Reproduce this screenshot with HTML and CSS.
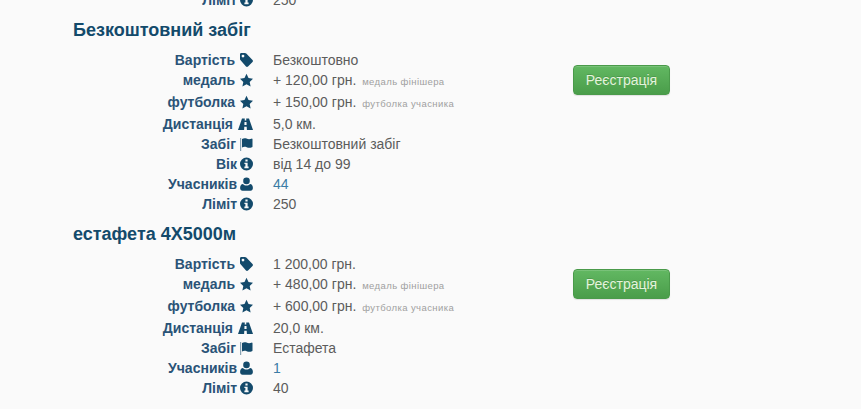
FILE: index.html
```html
<!DOCTYPE html>
<html lang="en">
<head>
    <meta charset="UTF-8">
    <meta name="viewport" content="width=device-width, initial-scale=1.0">
    <title>Дистанції</title>
    <link rel="stylesheet" href="styles.css">
</head>
<body>
    <svg class="defs" width="0" height="0">
        <symbol id="i-tag" viewBox="0 0 15 14"><path d="M2 1.300C2 .6 2.600 0 3.300 0h3.600c.5 0 1 .2 1.400.6l6.200 6.400c.6.6.6 1.400 0 2l-4.500 4.500c-.6.600-1.400.6-2 0L2.600 7.300C2.200 6.900 2 6.400 2 5.900zM5 4.500a1.400 1.400 0 1 0 0-2.800 1.400 1.400 0 0 0 0 2.800z" fill-rule="evenodd"/></symbol>
        <symbol id="i-star" viewBox="0 0 15 14"><path d="M8.500 .8l2 4.300 4.500.6-3.300 3.200.9 4.600-4.100-2.300-4.100 2.300.9-4.600L2 5.700l4.500-.6z"/></symbol>
        <symbol id="i-road" viewBox="0 0 17 14"><path d="M6 1.500h2.800l-.1 2h1.600l-.1-2H13l4 11.500h-6.100l-.2-3.200H8.300L8.100 13H2zM8.500 5l-.1 3h2.200l-.1-3z" fill-rule="evenodd"/></symbol>
        <symbol id="i-flag" viewBox="0 0 14 14"><path d="M1 1h1.200v13H1z" opacity=".5"/><path d="M3 2c1.500-.9 3-1 4.500-.4s3 .8 5 .1c.6-.2 1 0 1 .5v7.200c0 .4-.2.6-.6.800-1.900.8-3.500.7-5.200 0-1.500-.6-3-.6-4.700.2z"/></symbol>
        <symbol id="i-info" viewBox="0 0 13 14"><path d="M6.500 .5a6.500 6.500 0 1 1 0 13 6.500 6.500 0 0 1 0-13zM5.400 2.600v1.900h2.200V2.600zM4.400 5.700v1.400h1v2.500h-1v1.600h4.200V9.600h-1V5.700z" fill-rule="evenodd"/></symbol>
        <symbol id="i-user" viewBox="0 0 13 14"><circle cx="6.500" cy="3.900" r="3.300"/><path d="M3 7c.9 1 2.100 1.500 3.500 1.500S9.100 8 10 7c1.900.2 2.900 1.600 2.900 4.100 0 1.600-1 2.700-2.400 2.700h-8C1.100 13.800.1 12.700.1 11.100.1 8.600 1.100 7.200 3 7z"/></symbol>
    </svg>

    <div class="page">
        <div class="detail-row cut-row">
            <span class="detail-label">Ліміт <svg class="ico"><use href="#i-info"/></svg></span>
            <span class="detail-value">250</span>
        </div>

        <section class="race">
            <h3 class="race-title">Безкоштовний забіг</h3>
            <div class="race-body">
                <div class="details">
                    <div class="detail-row">
                        <span class="detail-label">Вартість <svg class="ico ico-15"><use href="#i-tag"/></svg></span>
                        <span class="detail-value">Безкоштовно</span>
                    </div>
                    <div class="detail-row">
                        <span class="detail-label">медаль <svg class="ico ico-15"><use href="#i-star"/></svg></span>
                        <span class="detail-value">+ 120,00 грн. <small>медаль фінішера</small></span>
                    </div>
                    <div class="detail-row row-tall">
                        <span class="detail-label">футболка <svg class="ico ico-15"><use href="#i-star"/></svg></span>
                        <span class="detail-value">+ 150,00 грн. <small>футболка учасника</small></span>
                    </div>
                    <div class="detail-row row-tall">
                        <span class="detail-label">Дистанція <svg class="ico ico-17"><use href="#i-road"/></svg></span>
                        <span class="detail-value">5,0 км.</span>
                    </div>
                    <div class="detail-row">
                        <span class="detail-label">Забіг <svg class="ico ico-14"><use href="#i-flag"/></svg></span>
                        <span class="detail-value">Безкоштовний забіг</span>
                    </div>
                    <div class="detail-row">
                        <span class="detail-label">Вік <svg class="ico"><use href="#i-info"/></svg></span>
                        <span class="detail-value">від 14 до 99</span>
                    </div>
                    <div class="detail-row">
                        <span class="detail-label">Учасників <svg class="ico"><use href="#i-user"/></svg></span>
                        <span class="detail-value"><a href="#">44</a></span>
                    </div>
                    <div class="detail-row">
                        <span class="detail-label">Ліміт <svg class="ico"><use href="#i-info"/></svg></span>
                        <span class="detail-value">250</span>
                    </div>
                </div>
                <button class="btn-register">Реєстрація</button>
            </div>
        </section>

        <section class="race">
            <h3 class="race-title">естафета 4X5000м</h3>
            <div class="race-body">
                <div class="details">
                    <div class="detail-row">
                        <span class="detail-label">Вартість <svg class="ico ico-15"><use href="#i-tag"/></svg></span>
                        <span class="detail-value">1 200,00 грн.</span>
                    </div>
                    <div class="detail-row">
                        <span class="detail-label">медаль <svg class="ico ico-15"><use href="#i-star"/></svg></span>
                        <span class="detail-value">+ 480,00 грн. <small>медаль фінішера</small></span>
                    </div>
                    <div class="detail-row row-tall">
                        <span class="detail-label">футболка <svg class="ico ico-15"><use href="#i-star"/></svg></span>
                        <span class="detail-value">+ 600,00 грн. <small>футболка учасника</small></span>
                    </div>
                    <div class="detail-row row-tall">
                        <span class="detail-label">Дистанція <svg class="ico ico-17"><use href="#i-road"/></svg></span>
                        <span class="detail-value">20,0 км.</span>
                    </div>
                    <div class="detail-row">
                        <span class="detail-label">Забіг <svg class="ico ico-14"><use href="#i-flag"/></svg></span>
                        <span class="detail-value">Естафета</span>
                    </div>
                    <div class="detail-row">
                        <span class="detail-label">Учасників <svg class="ico"><use href="#i-user"/></svg></span>
                        <span class="detail-value"><a href="#">1</a></span>
                    </div>
                    <div class="detail-row">
                        <span class="detail-label">Ліміт <svg class="ico"><use href="#i-info"/></svg></span>
                        <span class="detail-value">40</span>
                    </div>
                </div>
                <button class="btn-register">Реєстрація</button>
            </div>
        </section>
    </div>
</body>
</html>
```

FILE: styles.css
```css
html, body { height: 100%; }
body { margin: 0; background: #fafafa; font-family: "Liberation Sans", Arial, sans-serif; font-size: 14px; line-height: 20px; color: #5c5c5c; overflow: hidden; }
.defs { display: block; height: 0; }
.page { margin-top: -10px; padding-left: 73px; }
.race { margin-top: 9px; }
.race-title { margin: 0; height: 22px; font-size: 18px; line-height: 22px; font-weight: bold; color: #134a6b; }
.race-body { display: flex; align-items: flex-start; margin-top: 9px; }
.details { width: 500px; flex: none; }
.detail-row { display: flex; height: 20px; }
.row-tall { margin-top: 2px; }
.detail-label { width: 180px; flex: none; display: flex; justify-content: flex-end; align-items: center; gap: 3px; font-weight: bold; color: #2a5377; }
.detail-value { margin-left: 20px; }
.detail-value a { color: #3a7ca5; text-decoration: none; }
.detail-value small { font-size: 9.5px; font-weight: normal; color: #a0a0a0; letter-spacing: .4px; margin-left: 2px; }
.ico { width: 13px; height: 14px; fill: #134a6b; flex: none; }
.ico-14 { width: 14px; }
.ico-15 { width: 15px; }
.ico-17 { width: 17px; }
.btn-register { margin-top: 15px; width: 97px; height: 30px; padding: 0; border: 1px solid #4a9a4a; border-radius: 4px; background: linear-gradient(#62b862, #4a9d4a); color: #e4f3dc; font-family: inherit; font-size: 14px; text-shadow: 0 -1px 0 rgba(0, 0, 0, .12); box-shadow: inset 0 1px 0 rgba(255, 255, 255, .15), 0 1px 1px rgba(0, 0, 0, .1); cursor: pointer; }
```
